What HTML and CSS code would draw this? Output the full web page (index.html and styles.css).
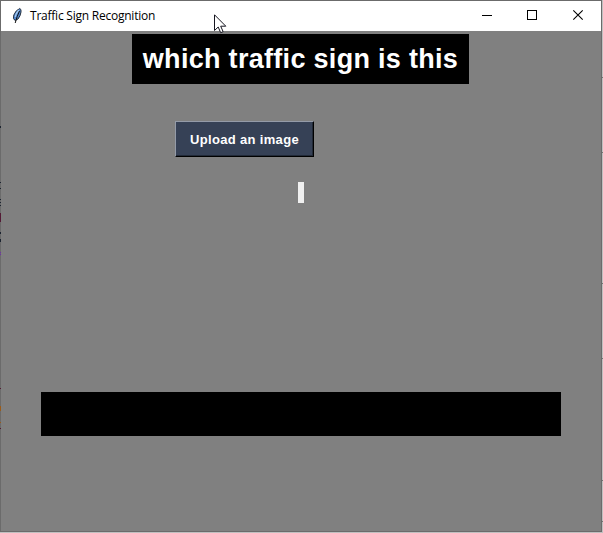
FILE: index.html
```html
<!DOCTYPE html>
<html lang="en">
<head>
<meta charset="utf-8">
<title>Traffic Sign Recognition</title>
<link rel="stylesheet" href="styles.css">
</head>
<body>
<main class="window">
  <header class="titlebar">
    <svg class="feather" width="12" height="18" viewBox="0 0 12 18">
      <path d="M8.800 1.500 Q10.500 2 10 5 Q9.500 9 7 12 L4 13.500 Q1.500 12 2.800 8 Q4.800 3 8.800 1.500Z" fill="#4f86cf" stroke="#26303d" stroke-width="1"/>
      <path d="M7.800 3 Q5 6 4.200 10" fill="none" stroke="#a9cdf2" stroke-width="1.200"/>
      <path d="M8.500 4 Q6 9 4.200 16" fill="none" stroke="#111" stroke-width="1"/>
    </svg>
    <span class="title">Traffic Sign Recognition</span>
    <div class="controls">
      <svg width="46" height="30" shape-rendering="crispEdges"><path d="M18 14.500H28" stroke="#000"/></svg>
      <svg width="46" height="30" shape-rendering="crispEdges"><rect x="17.500" y="9.500" width="9" height="9" fill="none" stroke="#000"/></svg>
      <svg width="46" height="30"><path d="M17.300 9.300L26.700 18.700M26.700 9.300L17.300 18.700" stroke="#000" stroke-width="1.100"/></svg>
    </div>
  </header>
  <section class="content">
    <h1 class="heading">which traffic sign is this</h1>
    <button class="upload">Upload an image</button>
    <div class="preview"></div>
    <div class="result"></div>
  </section>
</main>
<svg class="edge" width="603" height="533" shape-rendering="crispEdges">
  <path d="M0 126h1v2h-1zM0 182h1v1h-1zM0 188h1v1h-1zM0 199h1v1h-1zM0 202h1v1h-1zM0 205h1v1h-1zM0 232h1v2h-1zM0 239h1v3h-1z" fill="#1c2430"/>
  <path d="M0 213h1v9h-1zM0 388h1v1h-1zM0 428h1v1h-1z" fill="#541a35"/>
  <path d="M0 252h1v1h-1zM0 254h1v1h-1z" fill="#6f2bab"/>
  <path d="M0 406h1v5h-1zM0 422h1v1h-1z" fill="#9a5b18"/>
  <path d="M602 77h1v1h-1zM602 152h1v1h-1zM602 283h1v1h-1zM602 358h1v1h-1zM602 480h1v1h-1zM602 521h1v1h-1z" fill="#747474"/>
</svg>
<svg class="cursor" width="13" height="20" viewBox="0 0 13 20"><path d="M.5 .8V16.500L4.200 13L6.700 18.700L9.100 17.600L6.700 12.200H11.800Z" fill="#fff" stroke="#15151f"/></svg>
</body>
</html>
```
FILE: styles.css
```css
* { box-sizing: border-box; }
body {
  margin: 0;
  width: 603px;
  height: 533px;
  overflow: hidden;
  background: #c0c0c0;
}
.window {
  display: flex;
  flex-direction: column;
  width: 602px;
  height: 532px;
  border: 1px solid #6b6b6b;
}
.titlebar {
  display: flex;
  align-items: center;
  height: 30px;
  padding-left: 10px;
  background: #fff;
}
.feather { flex: none; margin-top: -1px; }
.title {
  margin-left: 7px;
  font: 12px/16px "Open Sans", "Noto Sans", sans-serif;
  letter-spacing: -0.23px;
  white-space: nowrap;
  color: #000;
}
.controls { display: flex; margin-left: auto; margin-right: -1px; }
.content {
  display: flex;
  flex: 1;
  flex-direction: column;
  background: #808080;
  font-family: "Liberation Sans", Arial, sans-serif;
}
.heading {
  width: 337px;
  height: 50px;
  margin: 3px 0 0 131px;
  background: #000;
  color: #fff;
  font-size: 27px;
  line-height: 50px;
  letter-spacing: 0.3px;
  text-align: center;
  white-space: nowrap;
}
.upload {
  width: 139px;
  height: 36px;
  margin: 37px 0 0 174px;
  padding: 1px 0 0;
  border: 1px solid;
  border-color: #949ba8 #000 #000 #949ba8;
  box-shadow: inset -1px -1px #222a38;
  background: #364156;
  color: #fff;
  font: bold 13px/33px "Liberation Sans", Arial, sans-serif;
  letter-spacing: 0.33px;
  white-space: nowrap;
}
.preview {
  width: 6px;
  height: 21px;
  margin: 25px 0 0 297px;
  background: #f0f0f0;
}
.result {
  width: 520px;
  height: 44px;
  margin: 189px 0 0 40px;
  background: #000;
}
.edge { position: absolute; left: 0; top: 0; pointer-events: none; }
.cursor { position: absolute; left: 214px; top: 14px; }
```
